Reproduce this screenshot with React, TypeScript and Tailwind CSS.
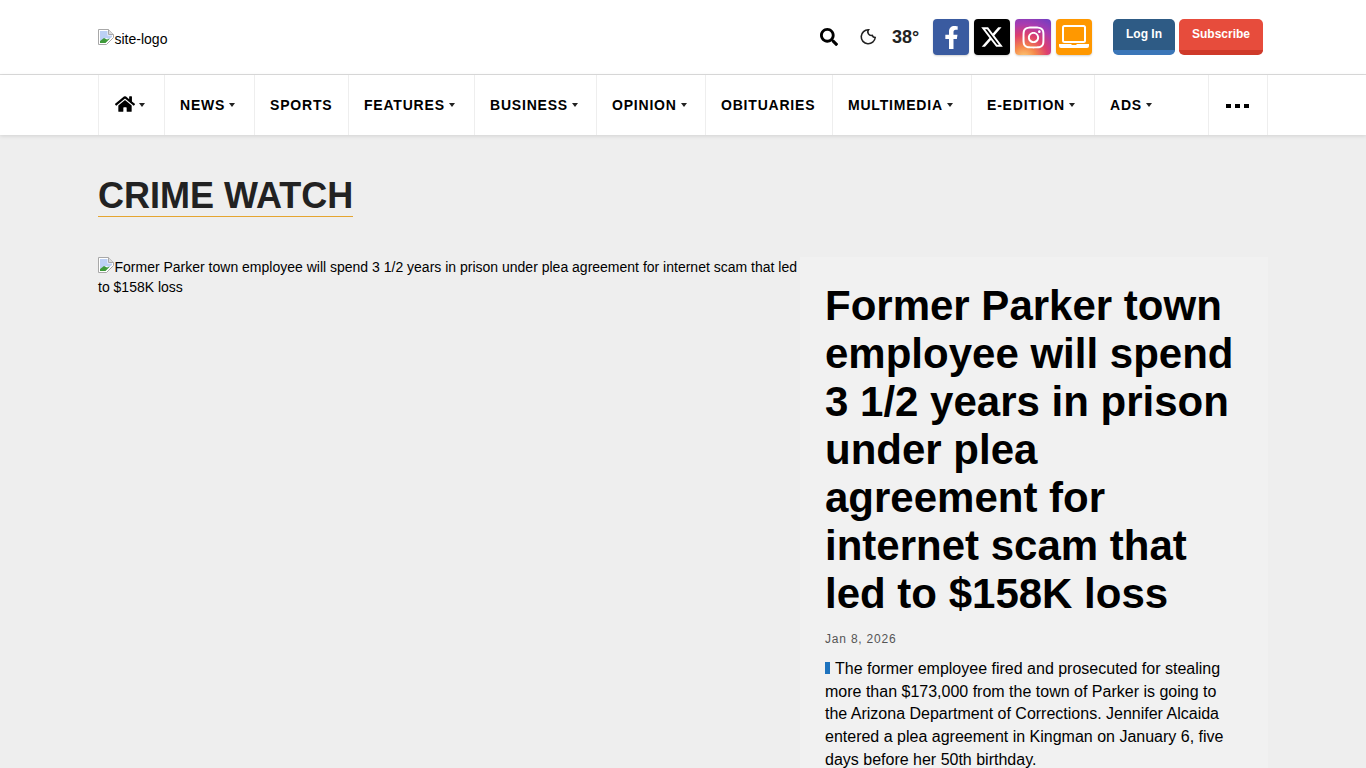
import { FaFacebookF, FaHome, FaInstagram, FaSearch } from "react-icons/fa";
import { FaXTwitter } from "react-icons/fa6";

const navItems = [
  { label: "NEWS", width: "w-[90px]", caret: true },
  { label: "SPORTS", width: "w-[94px]", caret: false },
  { label: "FEATURES", width: "w-[126px]", caret: true },
  { label: "BUSINESS", width: "w-[122px]", caret: true },
  { label: "OPINION", width: "w-[109px]", caret: true },
  { label: "OBITUARIES", width: "w-[127px]", caret: false },
  { label: "MULTIMEDIA", width: "w-[139px]", caret: true },
  { label: "E-EDITION", width: "w-[123px]", caret: true },
  { label: "ADS", width: "w-[114px]", caret: true },
];

function Caret() {
  return <span className="ml-[4px] mt-[-1px] h-0 w-0 border-x-[3px] border-t-[4px] border-x-transparent border-t-[#222]" />;
}

// Chrome's broken image glyph
function BrokenImage() {
  return (
    <svg width="16" height="16" viewBox="0 0 16 16" className="mr-[0.5px] inline align-[-1px]">
      <path d="M.5.5h10l5 5v3l-7 7H.5z" fill="#fff" stroke="#a8a8a8" />
      <path d="M10.5.5v5h5" fill="#dcdcdc" stroke="#a8a8a8" />
      <path d="M2 2h7.5v4.5H14V8l-3 2-3-1-6 3z" fill="#bcd0f4" />
      <path d="M2 12l4-3 3 1.5 3-1L7.5 14H2z" fill="#3f9a3a" />
    </svg>
  );
}

function SocialIcon({ bg, children }: { bg: string; children: React.ReactNode }) {
  return (
    <a className={`flex h-9 w-9 items-center justify-center rounded-[4px] text-white shadow-[0_1px_2px_rgba(0,0,0,0.18)] ${bg}`}>
      {children}
    </a>
  );
}

function Header() {
  return (
    <header className="h-[75px] bg-white border-b border-[#ddd]">
      <div className="mx-auto flex h-full w-[1170px] items-center justify-between pr-[5px]">
        <div className="pt-[4px] text-[14px] leading-[20px] text-black">
          <BrokenImage />
          site-logo
        </div>
        <div className="flex items-center">
          <FaSearch className="text-[18px] text-black" />
          <svg width="18" height="18" viewBox="0 0 18 18" fill="none" stroke="#222" strokeWidth="1.6" className="ml-[21px]">
            <path d="M9.5 1.8A7 7 0 1 0 16.2 9.5 3.4 3.4 0 0 1 13.2 7.4 3.6 3.6 0 0 1 9.5 1.8z" />
          </svg>
          <span className="ml-[15px] w-[41px] text-[18px] font-bold text-[#222]">38°</span>
          <div className="flex gap-[5px]">
            <SocialIcon bg="bg-[#3a5ba0]"><FaFacebookF className="text-[23px]" /></SocialIcon>
            <SocialIcon bg="bg-black"><FaXTwitter className="text-[24px]" /></SocialIcon>
            <SocialIcon bg="bg-[radial-gradient(circle_at_25%_110%,#fdd27a_0%,#f58a4b_25%,#dd3f6e_50%,#a93bb0_72%,#6a3fc4_100%)]"><FaInstagram className="text-[25px]" /></SocialIcon>
            <SocialIcon bg="bg-[#ff9800]">
              <svg width="30" height="24" viewBox="0 0 30 24" className="text-white">
                <rect x="4" y="1" width="22" height="16" rx="1.5" fill="none" stroke="currentColor" strokeWidth="2" />
                <path d="M0 19h12l1 1h4l1-1h12v2a2 2 0 0 1-2 2H2a2 2 0 0 1-2-2z" fill="currentColor" />
              </svg>
            </SocialIcon>
          </div>
          <div className="ml-[21px] flex gap-[4px] text-[12px] font-bold text-white">
            <a className="flex h-9 w-[62px] justify-center rounded-[5px] border-b-[5px] border-[#3b76b8] bg-[#2e5b85] pt-[7px] leading-[16px]">Log In</a>
            <a className="flex h-9 w-[84px] justify-center rounded-[5px] border-b-[5px] border-[#cf3a2a] bg-[#e74c3c] pt-[7px] leading-[16px]">Subscribe</a>
          </div>
        </div>
      </div>
    </header>
  );
}

function NavBar() {
  return (
    <nav className="h-[60px] bg-white shadow-[0_1px_4px_rgba(0,0,0,0.12)]">
      <div className="mx-auto flex h-full w-[1170px] border-l border-[#eee]">
        <div className="flex w-[66px] items-center justify-center border-r border-[#eee] pr-[4px]">
          <FaHome className="mb-[3px] text-[20px] text-black" />
          <Caret />
        </div>
        {navItems.map((item) => (
          <div
            key={item.label}
            className={`flex items-center border-r border-[#eee] pl-[15px] text-[14px] font-bold tracking-[0.8px] text-black ${item.width}`}
          >
            {item.label}
            {item.caret && <Caret />}
          </div>
        ))}
        <div className="flex w-[59px] items-center justify-center gap-[4px] border-r border-[#eee] pt-[2px] pr-[2px]">
          <span className="h-[4px] w-[5px] bg-black" />
          <span className="h-[4px] w-[5px] bg-black" />
          <span className="h-[4px] w-[5px] bg-black" />
        </div>
      </div>
    </nav>
  );
}

export default function App() {
  return (
    <div className="h-[768px] overflow-hidden bg-[#eee] font-['Liberation_Sans',Arial,sans-serif]">
      <Header />
      <NavBar />
      <main className="mx-auto w-[1170px]">
        <div className="pt-[41px]">
          <h1 className="inline-block border-b border-[#e5a530] pb-[1px] text-[36px] font-bold leading-[39px] text-[#222]">
            CRIME WATCH
          </h1>
        </div>
        <div className="mt-[40px] flex">
          <div className="w-[702px] text-[14px] leading-[20px] text-black">
            <BrokenImage />
            Former Parker town employee will spend 3 1/2 years in prison under plea agreement for internet scam that led to $158K loss
          </div>
          <article className="w-[468px] bg-[#f1f1f1] pl-[25px] pr-[32px] pt-[25px]">
            <h2 className="mr-[-8px] text-[42px] font-bold leading-[48px] text-black">
              Former Parker town employee will spend 3 1/2 years in prison under plea agreement for internet scam that led to $158K loss
            </h2>
            <div className="mt-[13px] text-[12px] leading-[16px] tracking-[0.8px] text-[#555]">Jan 8, 2026</div>
            <p className="mt-[10.85px] text-[16px] leading-[22.8px] text-black">
              <span className="mr-[5px] inline-block h-[12px] w-[5px] bg-[#1e73be]" />
              The former employee fired and prosecuted for stealing more than $173,000 from the town of Parker is going to the Arizona Department of Corrections. Jennifer Alcaida entered a plea agreement in Kingman on January 6, five days before her 50th birthday.
            </p>
          </article>
        </div>
      </main>
    </div>
  );
}
